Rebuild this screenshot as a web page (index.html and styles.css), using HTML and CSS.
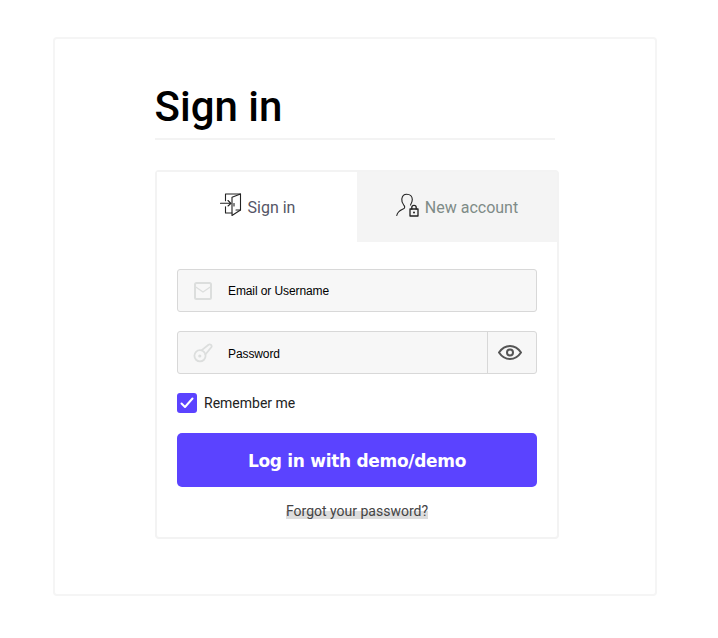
FILE: index.html
```html
<!DOCTYPE html>
<html lang="en">
<head>
    <meta charset="UTF-8">
    <meta name="viewport" content="width=device-width, initial-scale=1.0">
    <title>Sign in</title>
    <link rel="stylesheet" href="styles.css">
</head>
<body>
    <div class="page-card">
        <h1 class="page-title">Sign in</h1>
        <div class="login-box">
            <div class="tabs">
                <a class="tab tab-active" href="#">
                    <svg class="tab-icon" width="24" height="24" viewBox="0 0 24 24" fill="none" stroke="#222" stroke-width="1.1" stroke-linejoin="round" stroke-linecap="round">
                        <path d="M6.5 7.7V1H21.5V17H17"/>
                        <path d="M21.5 1L13 4.3V22.5L21.5 17"/>
                        <path d="M6.5 13.7V20H13"/>
                        <path d="M1.5 10.3H12M9 7.5L12 10.3L9 13"/>
                        <path d="M15 10.5V13"/>
                    </svg>
                    <span>Sign in</span>
                </a>
                <a class="tab" href="#">
                    <svg class="tab-icon" width="24" height="24" viewBox="0 0 24 24" fill="none" stroke="#222" stroke-width="1.1" stroke-linecap="round" stroke-linejoin="round">
                        <path d="M0.8 22.5C1.5 18 5 17 7.5 15.8C9 15 9 13.5 8 12.5C6 10 5.5 8 5.8 6C6.2 3 8 1.2 10.8 1.2C14 1.2 16.3 3.5 16.3 6.5C16.3 8.5 15.5 10.5 14.5 12"/>
                        <rect x="14" y="16" width="8" height="7" stroke-width="1.3"/>
                        <path d="M15.8 16V14.5C15.8 11.7 20.2 11.7 20.2 14.5V16" stroke-width="1.3"/>
                        <circle cx="18" cy="19.4" r="1" fill="#222" stroke="none"/>
                    </svg>
                    <span>New account</span>
                </a>
            </div>
            <form class="login-form">
                <div class="field">
                    <span class="field-icon">
                        <svg width="20" height="20" viewBox="0 0 20 20" fill="none" stroke="#dcdedd" stroke-width="2" stroke-linejoin="round">
                            <rect x="2" y="2" width="16" height="16" rx="1.5"/>
                            <path d="M2 5.5L10 11L18 5.5" stroke-width="1.3"/>
                        </svg>
                    </span>
                    <input class="field-input" type="text" placeholder="Email or Username">
                </div>
                <div class="field">
                    <span class="field-icon">
                        <svg width="20" height="20" viewBox="0 0 20 20" fill="none" stroke="#dcdedd" stroke-width="1.8" stroke-linecap="round" stroke-linejoin="round">
                            <circle cx="7" cy="12.8" r="5.6"/>
                            <circle cx="6.8" cy="13" r="0.7" fill="#dcdedd"/>
                            <path d="M8.5 7.4L15.5 1.8C17 0.9 19.2 2 18.5 4L12.4 11.5"/>
                        </svg>
                    </span>
                    <input class="field-input field-input-low" type="password" placeholder="Password">
                    <button class="eye-button" type="button" aria-label="Show password">
                        <svg width="24" height="15" viewBox="0 0 24 15" fill="none" stroke="#555" stroke-width="2">
                            <path d="M1 7.5C4 3 8 1 12 1C16 1 20 3 23 7.5C20 12 16 14 12 14C8 14 4 12 1 7.5Z"/>
                            <circle cx="12" cy="7.5" r="3"/>
                        </svg>
                    </button>
                </div>
                <label class="remember">
                    <span class="check">
                        <svg width="14" height="12" viewBox="0 0 14 12" fill="none" stroke="#fff" stroke-width="2" stroke-linecap="round" stroke-linejoin="round">
                            <path d="M1.5 6.5L5 10L12.5 1.5"/>
                        </svg>
                    </span>
                    Remember me
                </label>
                <button class="login-button" type="button">Log in with demo/demo</button>
                <div class="forgot"><a href="#">Forgot your password?</a></div>
            </form>
        </div>
    </div>
</body>
</html>
```

FILE: styles.css
```css
* {
    box-sizing: border-box;
}
body {
    margin: 0;
    padding: 37px 61px 41px 53px;
    background-color: #fff;
    font-family: Roboto, Arial, sans-serif;
}
.page-card {
    height: 559px;
    padding: 42px 98px 0 100px;
    border: 2px solid #f5f5f5;
    border-radius: 4px;
}
.page-title {
    width: 400px;
    margin: 0 0 30px;
    padding-bottom: 5px;
    border-bottom: 2px solid #f3f3f3;
    color: #000;
    font-size: 42px;
    font-weight: 500;
    line-height: 52px;
    text-indent: -0.5px;
}
.login-box {
    width: 404px;
    height: 369px;
    border: 2px solid #f3f3f3;
    border-radius: 4px;
}
.tabs {
    display: flex;
    height: 70px;
}
.tab {
    flex: 1;
    display: flex;
    justify-content: center;
    align-items: center;
    gap: 5px;
    background-color: #f4f4f4;
    color: #7e8b87;
    font-size: 16px;
    text-decoration: none;
}
.tab-active {
    background-color: #fff;
    color: #555566;
}
.tab-icon {
    margin-top: -4px;
}
.login-form {
    padding: 27px 20px 0;
}
.field {
    display: flex;
    height: 43px;
    margin-bottom: 19px;
    background-color: #f7f7f7;
    border: 1px solid #d8d8d8;
    border-radius: 3px;
}
.field-icon {
    width: 50px;
    display: flex;
    justify-content: center;
    align-items: center;
    flex-shrink: 0;
}
.field-input {
    flex: 1;
    min-width: 0;
    padding: 0;
    border: none;
    outline: none;
    background: transparent;
    font-family: "Liberation Sans", Arial, sans-serif;
    font-size: 12px;
    letter-spacing: -0.1px;
}
.field-input-low {
    padding-top: 2px;
}
.field-input::placeholder {
    color: #000;
    opacity: 1;
}
.eye-button {
    width: 49px;
    display: flex;
    justify-content: center;
    align-items: center;
    padding: 0 5px 0 0;
    border: none;
    border-left: 1px solid #d8d8d8;
    background: transparent;
    cursor: pointer;
}
.remember {
    display: flex;
    align-items: center;
    gap: 7px;
    height: 20px;
    color: #222;
    font-size: 14px;
}
.check {
    width: 20px;
    height: 20px;
    display: flex;
    justify-content: center;
    align-items: center;
    background-color: #5b43ff;
    border-radius: 3px;
}
.login-button {
    display: block;
    width: 100%;
    height: 54px;
    margin-top: 20px;
    padding: 2px 0 0;
    border: none;
    border-radius: 5px;
    background-color: #5b43ff;
    color: #fff;
    font-family: "DejaVu Sans", sans-serif;
    font-size: 17px;
    font-weight: bold;
    letter-spacing: -0.3px;
    cursor: pointer;
}
.forgot {
    margin-top: 15px;
    text-align: center;
    font-size: 14px;
    line-height: 18px;
}
.forgot a {
    color: #444;
    text-decoration: none;
    background: linear-gradient(#dddddd, #dddddd) no-repeat left bottom / 100% 8px;
}
```
